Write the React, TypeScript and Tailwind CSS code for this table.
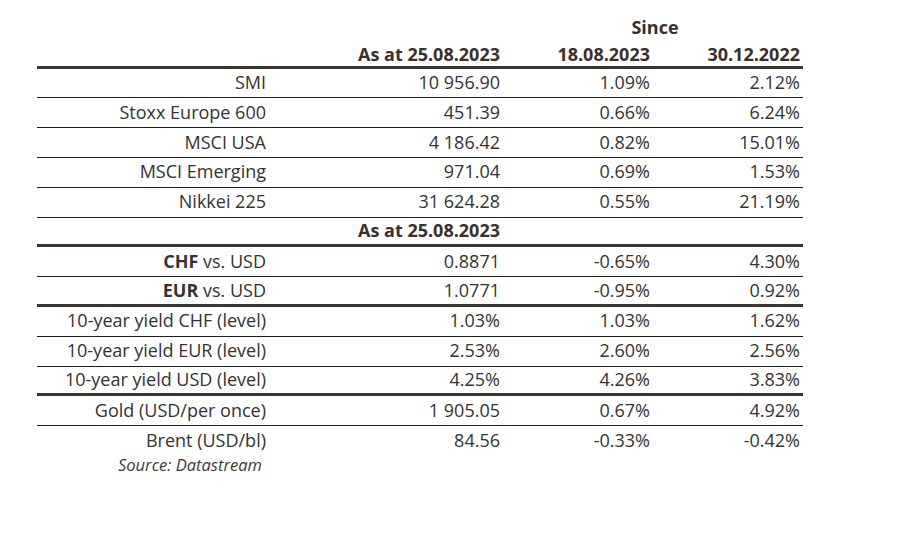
import React from "react";

type Row = { label: React.ReactNode; v: string; a: string; b: string; border: "thin" | "thick" | "none" };

const rows1: Row[] = [
  { label: "SMI", v: "10 956.90", a: "1.09%", b: "2.12%", border: "thin" },
  { label: "Stoxx Europe 600", v: "451.39", a: "0.66%", b: "6.24%", border: "thin" },
  { label: "MSCI USA", v: "4 186.42", a: "0.82%", b: "15.01%", border: "thin" },
  { label: "MSCI Emerging", v: "971.04", a: "0.69%", b: "1.53%", border: "thin" },
  { label: "Nikkei 225", v: "31 624.28", a: "0.55%", b: "21.19%", border: "thin" },
];

const rows2: Row[] = [
  { label: <><b className="font-bold">CHF</b> vs. USD</>, v: "0.8871", a: "-0.65%", b: "4.30%", border: "thin" },
  { label: <><b className="font-bold">EUR</b> vs. USD</>, v: "1.0771", a: "-0.95%", b: "0.92%", border: "thick" },
  { label: "10-year yield CHF (level)", v: "1.03%", a: "1.03%", b: "1.62%", border: "thin" },
  { label: "10-year yield EUR (level)", v: "2.53%", a: "2.60%", b: "2.56%", border: "thin" },
  { label: "10-year yield USD (level)", v: "4.25%", a: "4.26%", b: "3.83%", border: "thick" },
  { label: "Gold (USD/per once)", v: "1 905.05", a: "0.67%", b: "4.92%", border: "thin" },
  { label: "Brent (USD/bl)", v: "84.56", a: "-0.33%", b: "-0.42%", border: "none" },
];

const grid = "grid grid-cols-[232px_234px_150px_150px] h-[29.8px] items-center";

function borderCls(b: Row["border"]) {
  if (b === "thin") return "border-b border-[#1e1e1e]";
  if (b === "thick") return "border-b-[3px] border-[#3a3530]";
  return "";
}

function DataRow({ r }: { r: Row }) {
  return (
    <div className={`${grid} ${borderCls(r.border)}`}>
      <div className="text-right pr-[3px] -mt-[2px]">{r.label}</div>
      <div className="text-right pr-[3px] -mt-[2px]">{r.v}</div>
      <div className="text-right pr-[3px] -mt-[2px]">{r.a}</div>
      <div className="text-right pr-[3px] -mt-[2px]">{r.b}</div>
    </div>
  );
}

export default function App() {
  return (
    <div
      className="w-[903px] h-[539px] bg-white text-[#333333] text-[18px] leading-none pt-[9px] pl-[37px]"
      style={{ fontFamily: '"Open Sans", "Noto Sans", sans-serif' }}
    >
      <div className="w-[766px]">
        <div className={grid}>
          <div />
          <div />
          <div className="col-span-2 text-center font-bold text-[#3a302b] pl-[4px] pt-[6px]">Since</div>
        </div>
        <div className={`${grid} border-b-[3px] border-[#3a3530] font-bold text-[#3a302b] h-[27.8px]`}>
          <div />
          <div className="text-right pr-[3px] pt-[3px]">As at 25.08.2023</div>
          <div className="text-right pr-[3px] pt-[3px]">18.08.2023</div>
          <div className="text-right pr-[3px] pt-[3px]">30.12.2022</div>
        </div>
        {rows1.map((r, i) => (
          <DataRow key={i} r={r} />
        ))}
        <div className={`${grid} border-b-[3px] border-[#3a3530] font-bold text-[#3a302b]`}>
          <div />
          <div className="text-right pr-[3px] -mt-[2px]">As at 25.08.2023</div>
          <div />
          <div />
        </div>
        {rows2.map((r, i) => (
          <DataRow key={i} r={r} />
        ))}
        <div className="pl-[81px] pt-[1px] italic text-[16.5px] text-[#3a3a3a]">Source: Datastream</div>
      </div>
    </div>
  );
}
